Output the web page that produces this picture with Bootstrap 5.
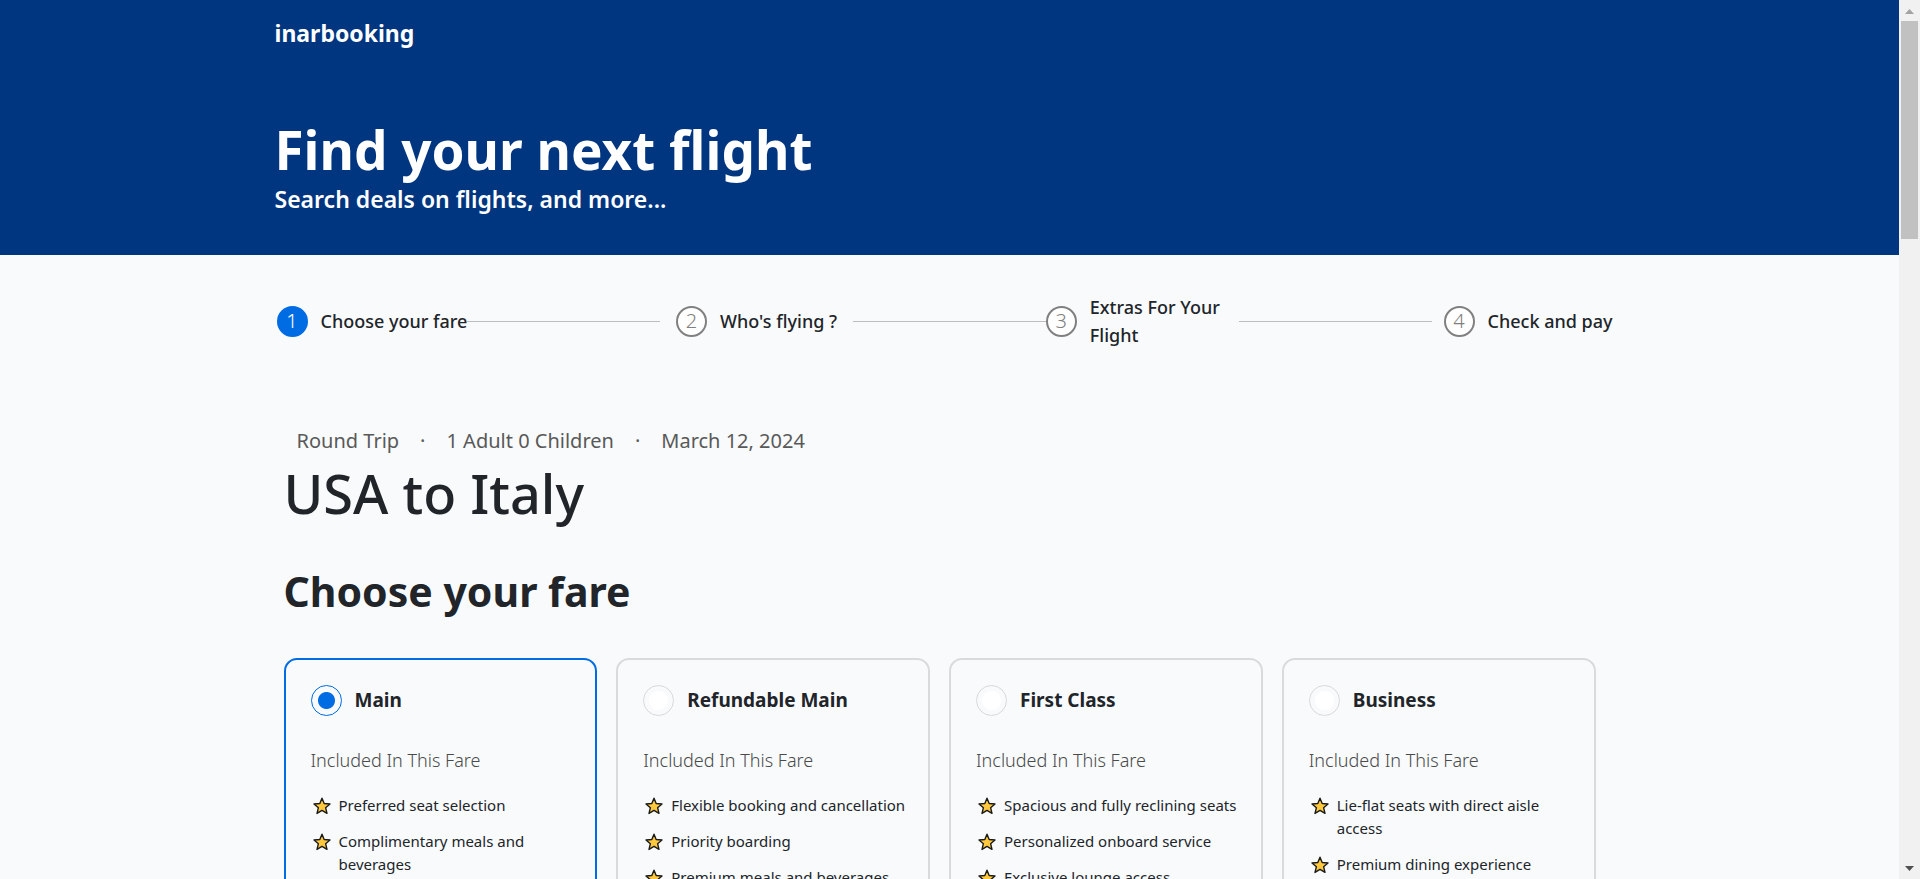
<!DOCTYPE html>
<html lang="en">
<head>
<meta charset="utf-8">
<meta name="viewport" content="width=device-width, initial-scale=1">
<title>inarbooking</title>
<link href="https://cdn.jsdelivr.net/npm/bootstrap@5.3.0/dist/css/bootstrap.min.css" rel="stylesheet">
<style>
  body { font-family: "Noto Sans", "Open Sans", sans-serif; background: #f8fafc; color: #212529; }
  .page-wrap { max-width: 1350px; margin: 0 auto; }

  .site-header { background: #003580; padding: 15px 0 41px; }
  .brand-link { font-size: 23px; line-height: 36px; font-weight: 700; }
  .hero-title { font-size: 53px; line-height: 67px; font-weight: 700; margin: 65px 0 2px; }
  .hero-sub { font-size: 23px; line-height: 29px; font-weight: 600; }

  .steps { padding: 38px 12px 0 2px; }
  .step { gap: 13px; font-size: 18px; line-height: 28px; font-weight: 500; }
  .step-num { width: 31px; height: 31px; border: 2px solid #808080; background: #fff; color: #808080; font-weight: 300; font-size: 20px; }
  .step-num.active { background: #006ce4; border-color: #006ce4; color: #fff; }
  .step-two { margin: 0 16px; }
  .step-three { width: 193px; }
  .step-four { margin-left: 12px; }
  .step-line { height: 1px; background: #bdbdbd; }

  .fare-section { padding: 77px 29px 0 9px; }
  .trip-info { font-size: 20px; line-height: 30px; color: #595959; gap: 21px; padding-left: 13px; margin-bottom: 4px; }
  .route-title { font-size: 54px; line-height: 67px; font-weight: 500; margin-bottom: 39px; }
  .fare-heading { font-size: 41px; line-height: 50px; font-weight: 700; margin-bottom: 42px; }

  .fare-row { gap: 19px; }
  .fare { flex: 1 1 0; min-width: 0; border: 2px solid #d9dadb; border-radius: 13px; padding: 25px 20px 25px 25px; }
  .fare:has(input:checked) { border-color: #006ce4; }
  .fare-pick { gap: 13px; font-size: 19px; line-height: 31px; font-weight: 700; }
  .fare-pick input { appearance: none; width: 31px; height: 31px; margin: 0; border: 1px solid #d9d9d9; border-radius: 50%;
    background: radial-gradient(circle, #fff 9px, transparent 10px); }
  .fare-pick input:checked { border-color: #006ce4; background: radial-gradient(circle, #006ce4 8px, transparent 9px); }
  .fare-sub { font-size: 18px; line-height: 27px; font-weight: 300; color: #4a4a4a; margin: 31px 0 20px; }
  .perks { gap: 13px; font-size: 15px; line-height: 23px; }
  .perks li { display: flex; gap: 8px; padding-left: 2px; }
  .perks svg { flex: none; width: 18px; height: 18px; margin-top: 3px; }

  .scroll-rail { width: 21px; background: #f1f1f1; padding: 9px 2px 8px; }
  .scroll-thumb { height: 218px; width: 17px; background: #c1c1c1; margin: 7px 0 auto; }
  .scroll-rail svg { width: 9px; height: 5px; }
</style>
</head>
<body>
<svg class="d-none" aria-hidden="true">
  <symbol id="star" viewBox="0 0 18 18">
    <path d="M9 1.2 11.2 6.5 17 7 12.6 10.7 14 16.4 9 13.4 4 16.4 5.4 10.7 1 7 6.8 6.5Z" fill="#ffc83d" stroke="#1a1a1a" stroke-width="1.4" stroke-linejoin="round"/>
  </symbol>
</svg>
<div class="d-flex vh-100 overflow-hidden">
  <div class="flex-grow-1 overflow-hidden">
    <header class="site-header text-white">
      <div class="page-wrap">
        <a href="#" class="brand-link d-block text-white text-decoration-none">inarbooking</a>
        <h1 class="hero-title">Find your next flight</h1>
        <p class="hero-sub mb-0">Search deals on flights, and more...</p>
      </div>
    </header>
    <main class="page-wrap">
      <div class="steps d-flex align-items-center">
        <div class="step d-flex align-items-center"><span class="step-num active rounded-circle d-flex align-items-center justify-content-center flex-shrink-0">1</span><span>Choose your fare</span></div>
        <div class="step-line flex-fill"></div>
        <div class="step step-two d-flex align-items-center"><span class="step-num rounded-circle d-flex align-items-center justify-content-center flex-shrink-0">2</span><span>Who's flying ?</span></div>
        <div class="step-line flex-fill"></div>
        <div class="step step-three d-flex align-items-center"><span class="step-num rounded-circle d-flex align-items-center justify-content-center flex-shrink-0">3</span><span>Extras For Your Flight</span></div>
        <div class="step-line flex-fill"></div>
        <div class="step step-four d-flex align-items-center"><span class="step-num rounded-circle d-flex align-items-center justify-content-center flex-shrink-0">4</span><span>Check and pay</span></div>
      </div>
      <section class="fare-section">
        <div class="trip-info d-flex"><span>Round Trip</span><span>·</span><span>1 Adult 0 Children</span><span>·</span><span>March 12, 2024</span></div>
        <h2 class="route-title">USA to Italy</h2>
        <h2 class="fare-heading">Choose your fare</h2>
        <div class="fare-row d-flex">
          <div class="fare">
            <label class="fare-pick d-flex align-items-center"><input type="radio" name="fare" checked>Main</label>
            <p class="fare-sub">Included In This Fare</p>
            <ul class="perks list-unstyled d-flex flex-column mb-0">
              <li><svg><use href="#star"/></svg>Preferred seat selection</li>
              <li><svg><use href="#star"/></svg>Complimentary meals and beverages</li>
            </ul>
          </div>
          <div class="fare">
            <label class="fare-pick d-flex align-items-center"><input type="radio" name="fare">Refundable Main</label>
            <p class="fare-sub">Included In This Fare</p>
            <ul class="perks list-unstyled d-flex flex-column mb-0">
              <li><svg><use href="#star"/></svg>Flexible booking and cancellation</li>
              <li><svg><use href="#star"/></svg>Priority boarding</li>
              <li><svg><use href="#star"/></svg>Premium meals and beverages</li>
            </ul>
          </div>
          <div class="fare">
            <label class="fare-pick d-flex align-items-center"><input type="radio" name="fare">First Class</label>
            <p class="fare-sub">Included In This Fare</p>
            <ul class="perks list-unstyled d-flex flex-column mb-0">
              <li><svg><use href="#star"/></svg>Spacious and fully reclining seats</li>
              <li><svg><use href="#star"/></svg>Personalized onboard service</li>
              <li><svg><use href="#star"/></svg>Exclusive lounge access</li>
            </ul>
          </div>
          <div class="fare">
            <label class="fare-pick d-flex align-items-center"><input type="radio" name="fare">Business</label>
            <p class="fare-sub">Included In This Fare</p>
            <ul class="perks list-unstyled d-flex flex-column mb-0">
              <li><svg><use href="#star"/></svg>Lie-flat seats with direct aisle access</li>
              <li><svg><use href="#star"/></svg>Premium dining experience</li>
            </ul>
          </div>
        </div>
      </section>
    </main>
  </div>
  <div class="scroll-rail d-flex flex-column align-items-center flex-shrink-0" aria-hidden="true">
    <svg viewBox="0 0 9 5"><path d="M0 5 4.5 0 9 5Z" fill="#a3a3a3"/></svg>
    <div class="scroll-thumb"></div>
    <svg viewBox="0 0 9 5"><path d="M0 0 4.5 5 9 0Z" fill="#505050"/></svg>
  </div>
</div>
<script src="https://cdn.jsdelivr.net/npm/bootstrap@5.3.0/dist/js/bootstrap.bundle.min.js"></script>
</body>
</html>
